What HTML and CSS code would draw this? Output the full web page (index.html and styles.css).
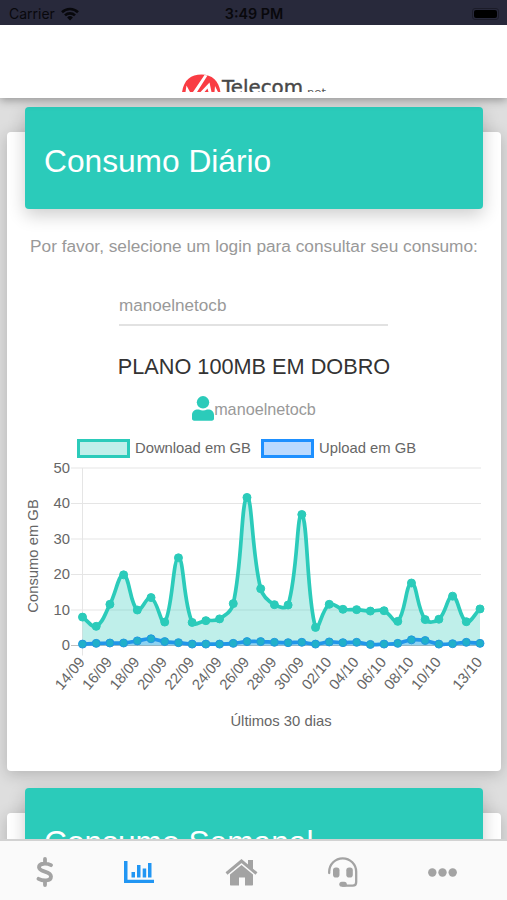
FILE: index.html
```
<!DOCTYPE html>
<html lang="pt">

<head>
    <meta charset="UTF-8">
    <meta name="viewport" content="width=device-width, initial-scale=1.0">
    <title>Consumo</title>
    <link rel="stylesheet" href="styles.css">
</head>

<body>
    <div class="status">
        <div class="carrier">
            <span>Carrier</span>
            <svg width="18" height="14" viewBox="0 0 18 14">
                <path d="M1 5.200a11.500 11.500 0 0 1 16 0M4 8.400a7.200 7.200 0 0 1 10 0" fill="none" stroke="#08080c" stroke-width="2.600"/>
                <path d="M9 13.400l-2.900-3a4.200 4.200 0 0 1 5.800 0z" fill="#08080c"/>
            </svg>
        </div>
        <span class="hora">3:49 PM</span>
        <div class="bateria"><i></i></div>
    </div>

    <header class="topo">
        <!-- logo cortada pela borda do topo -->
        <svg class="logo" width="150" height="20" viewBox="0 0 150 20">
            <path d="M0 20.500C1.500 8 9 2.500 19.500 2.500S37 9 38.500 20.500z" fill="#f93c43"/>
            <path d="M3.500 20l1-6.500 3.500 6.500zM11 20L22.500 3l3 .500L15 20zM18.500 20l9-9.500 2 9.500h-3l-1-3.500-3 3.500zM32.500 20l.500-6 3 6z" fill="#fff"/>
            <text class="logo-nome" x="40" y="22" textLength="81" lengthAdjust="spacingAndGlyphs">Telecom</text>
            <text class="logo-net" x="125" y="23.500" textLength="19" lengthAdjust="spacingAndGlyphs">net</text>
        </svg>
    </header>

    <main class="conteudo">
        <section class="card diario">
            <h1>Consumo Diário</h1>
            <p class="aviso"><span>Por favor, selecione um login para consultar seu consumo:</span></p>
            <div class="login">manoelnetocb</div>
            <h2 class="plano">PLANO 100MB EM DOBRO</h2>
            <div class="usuario">
                <svg width="22" height="25" viewBox="0 0 22 25">
                    <circle cx="11" cy="6.300" r="6.200" fill="#2bcbba"/>
                    <path d="M0 22.500v-3.500c0-3.500 2.500-5.500 6-5.500h1c2.500 1.200 5.500 1.200 8 0h1c3.500 0 6 2 6 5.500v3.500c0 1.400-.8 2.200-2.200 2.200H2.200C.8 24.700 0 23.900 0 22.500z" fill="#2bcbba"/>
                </svg>
                <span>manoelnetocb</span>
            </div>
            <div class="legenda">
                <i class="download"></i><span class="leg-down">Download em GB</span>
                <i class="upload"></i><span>Upload em GB</span>
            </div>
            <svg id="grafico" width="494" height="280" viewBox="0 0 494 280"></svg>
        </section>

        <section class="card">
            <h1>Consumo Semanal</h1>
        </section>
    </main>

    <nav class="menu">
        <a class="item">
            <svg width="18" height="30" viewBox="0 0 18 30">
                <path d="M15 8.200C11 6 3 5.800 3 10.300c0 5.200 12 3.500 12 9.200 0 5.200-8.300 4.600-12.500 2.300M9 2v4M9 24v4" fill="none" stroke="#a3a3a3" stroke-width="3.800" stroke-linecap="round"/>
            </svg>
        </a>
        <a class="item">
            <svg width="30" height="24" viewBox="0 0 30 24">
                <path d="M0 1h3.500v18.700H30V23H0zM7.500 12h3.500v5.500H7.500zM13 5h3.500v12.500H13zM18.700 8.500h3.500v9h-3.500zM24 3h3.500v14.500H24z" fill="#2196f3"/>
            </svg>
        </a>
        <a class="item">
            <svg width="33" height="27" viewBox="0 0 33 27">
                <path d="M1.500 14.500L16.500 2l15 12.500" fill="none" stroke="#a3a3a3" stroke-width="3"/>
                <path d="M23 1h5v10l-5-4zM5 15.500L16.500 6 28 15.500V25.500c0 .6-.4 1-1 1h-7v-8h-6v8H6c-.6 0-1-.4-1-1z" fill="#a3a3a3"/>
            </svg>
        </a>
        <a class="item">
            <svg width="30" height="30" viewBox="0 0 30 30">
                <path d="M1.200 16v-1.200a13.500 13.500 0 0 1 27 0V25c0 2.300-1.200 3.700-3.500 3.700H15" fill="none" stroke="#a3a3a3" stroke-width="2.300" stroke-linecap="round"/>
                <rect x="5" y="10.500" width="6.500" height="10" rx="2.800" fill="#a3a3a3"/>
                <rect x="18.300" y="10.500" width="6.500" height="10" rx="2.800" fill="#a3a3a3"/>
                <rect x="11.300" y="24.800" width="7.500" height="5" rx="2.500" fill="#a3a3a3"/>
            </svg>
        </a>
        <a class="item">
            <svg width="29" height="9" viewBox="0 0 29 9">
                <g fill="#a3a3a3">
                    <circle cx="4.300" cy="4.500" r="4.200"/>
                    <circle cx="14.500" cy="4.500" r="4.200"/>
                    <circle cx="24.700" cy="4.500" r="4.200"/>
                </g>
            </svg>
        </a>
    </nav>

    <script src="script.js"></script>
</body>

</html>
```
FILE: styles.css
```
* {
    box-sizing: border-box;
}

body {
    margin: 0;
    height: 900px;
    display: flex;
    flex-direction: column;
    overflow: hidden;
    background-color: #dedede;
    font-family: "Liberation Sans", Arial, sans-serif;
}

.status {
    height: 25px;
    flex-shrink: 0;
    display: grid;
    grid-template-columns: 1fr auto 1fr;
    align-items: center;
    padding: 2px 8px 0 9px;
    background-color: #28293b;
    color: #08080c;
    font-family: Inter, sans-serif;
    font-size: 13.5px;
    z-index: 3;
}

.carrier {
    display: flex;
    align-items: center;
    gap: 6px;
    font-size: 14px;
}

.hora {
    font-size: 14.3px;
    font-weight: 600;
}

.bateria {
    justify-self: end;
    width: 27px;
    height: 12px;
    padding: 1px;
    border: 1px solid #1c1c29;
    border-radius: 3px;
}

.bateria i {
    display: block;
    height: 8px;
    border-radius: 2px;
    background-color: #000;
}

.topo {
    height: 73px;
    flex-shrink: 0;
    padding: 47px 0 0 182px;
    background-color: #fff;
    box-shadow: 0 2px 9px rgba(0, 0, 0, 0.35);
    z-index: 2;
}

.logo {
    display: block;
}

.logo-nome {
    font-family: "DejaVu Sans", sans-serif;
    font-size: 19px;
    fill: #484848;
    stroke: #484848;
    stroke-width: 0.4px;
}

.logo-net {
    font-family: "DejaVu Sans", sans-serif;
    font-size: 11px;
    fill: #555;
}

.conteudo {
    flex: 1;
    min-height: 0;
    overflow: hidden;
    padding: 34px 6px 0 7px;
}

.card {
    height: 639px;
    margin-bottom: 42px;
    border-radius: 4px;
    background-color: #fff;
    box-shadow: 0 3px 16px rgba(0, 0, 0, 0.2);
    display: flow-root;
}

.card h1 {
    height: 102px;
    margin: -25px 18px 0;
    padding: 0 19px;
    border-radius: 4px;
    background-color: #2bcbba;
    box-shadow: 0 6px 18px rgba(0, 0, 0, 0.2);
    color: #fff;
    font-size: 31.7px;
    font-weight: normal;
    line-height: 108px;
}

.aviso {
    height: 24px;
    margin: 25px 0 0;
    color: #999;
    font-size: 17.25px;
    line-height: 24px;
    text-align: center;
    white-space: nowrap;
}

.login {
    width: 269px;
    height: 38px;
    margin: 30px 0 0 112px;
    border-bottom: 2px solid #e2e2e2;
    color: #999;
    font-size: 17.1px;
    line-height: 36px;
}

.plano {
    height: 30px;
    margin: 26px 0 0;
    color: #333;
    font-size: 21.7px;
    font-weight: normal;
    line-height: 30px;
    text-align: center;
}

.usuario {
    display: flex;
    justify-content: center;
    align-items: center;
    height: 27px;
    margin-top: 13px;
    color: #999;
    font-size: 16.2px;
}

.usuario span {
    padding-top: 2px;
}

.legenda {
    display: flex;
    align-items: center;
    height: 20px;
    margin: 16px 0 0 70px;
    color: #666;
    font-size: 14.8px;
    white-space: nowrap;
}

.legenda i {
    width: 53px;
    height: 19px;
    margin-right: 5px;
    border: 3.5px solid #2bcbba;
    background-color: #c0efea;
}

.legenda .upload {
    border-color: #1e90ff;
    background-color: #bbdaff;
}

.leg-down {
    margin-right: 10px;
}

#grafico {
    display: block;
    margin-top: 1px;
}

#grafico text {
    fill: #666;
    font-size: 14.8px;
}

.grade {
    stroke: #e5e5e5;
}

.grade-zero {
    stroke: #bfbfbf;
}

.linha {
    fill: none;
    stroke-width: 3.7;
    stroke-linejoin: round;
}

.down-area {
    fill: rgba(43, 203, 186, 0.3);
}

.down-linha {
    stroke: #2bcbba;
}

.down-ponto {
    fill: #2bcbba;
    stroke: #2bcbba;
}

.up-area {
    fill: rgba(30, 144, 255, 0.3);
}

.up-linha {
    stroke: #2196ea;
}

.up-ponto {
    fill: #20b0ca;
    stroke: #2199e0;
}

.menu {
    display: flex;
    justify-content: space-between;
    height: 61px;
    flex-shrink: 0;
    padding: 3px 50px 0 36px;
    border-top: 2px solid #d2d2d2;
    background-color: #fafafa;
    z-index: 2;
}

.item {
    display: flex;
    align-items: center;
}
```
FILE: script.js
```
const download = [8, 5.4, 11.6, 19.9, 10, 13.5, 6.6, 24.7, 6.5, 7, 7.5, 11.8, 41.7, 16, 11.5, 11.4, 36.9, 5.1, 11.6, 10.2, 10.1, 9.7, 9.8, 6.8, 17.6, 7.3, 7.4, 13.9, 6.7, 10.3];
const upload = [0.4, 0.6, 0.7, 0.7, 1.3, 1.9, 1.1, 0.8, 0.4, 0.4, 0.4, 0.6, 1.1, 1.1, 0.9, 0.8, 0.9, 0.4, 1, 0.8, 0.9, 0.3, 0.4, 0.6, 1.6, 1.4, 0.4, 0.5, 0.9, 0.6];

//area do grafico dentro do svg
const esq = 75.5, dir = 473, topo = 9, base = 186.5;
const svg = document.getElementById("grafico");

function x(i) {
    return esq + i * (dir - esq) / 29;
}

function y(v) {
    return base - v * (base - topo) / 50;
}

function limita(v) {
    return Math.max(topo, Math.min(base, v));
}

//curva suave passando por todos os pontos
function curva(dados) {
    const p = dados.map((v, i) => ({ x: x(i), y: y(v) }));
    const c = p.map((atual, i) => {
        const ant = p[i - 1] || atual;
        const prox = p[i + 1] || atual;
        const d1 = Math.hypot(atual.x - ant.x, atual.y - ant.y);
        const d2 = Math.hypot(prox.x - atual.x, prox.y - atual.y);
        const fa = 0.4 * d1 / (d1 + d2);
        const fb = 0.4 * d2 / (d1 + d2);
        return {
            ax: atual.x - fa * (prox.x - ant.x), ay: limita(atual.y - fa * (prox.y - ant.y)),
            bx: atual.x + fb * (prox.x - ant.x), by: limita(atual.y + fb * (prox.y - ant.y))
        };
    });
    let d = `M${p[0].x} ${p[0].y}`;
    for (let i = 1; i < p.length; i++) {
        d += `C${c[i - 1].bx} ${c[i - 1].by} ${c[i].ax} ${c[i].ay} ${p[i].x} ${p[i].y}`;
    }
    return d;
}

function serie(dados, nome) {
    const d = curva(dados);
    let s = `<path class="${nome}-area" d="${d}V${base}H${esq}z"/>`;
    s += `<path class="linha ${nome}-linha" d="${d}"/>`;
    dados.forEach((v, i) => {
        s += `<circle class="${nome}-ponto" cx="${x(i)}" cy="${y(v)}" r="4"/>`;
    });
    return s;
}

let html = "";
for (let v = 0; v <= 50; v += 10) {
    html += `<path class="${v ? "grade" : "grade-zero"}" d="M64 ${y(v)}H474"/>`;
    html += `<text x="63" y="${y(v) + 4.5}" text-anchor="end">${v}</text>`;
}
html += `<path class="grade" d="M${esq} ${topo}V${base + 10}"/>`;

//datas, uma sim e uma nao, terminando em 13/10
for (let i = 0; i < 30; i += 2) {
    if (i === 28) i = 29;
    const dia = i < 17 ? 14 + i : i - 16;
    const rotulo = String(dia).padStart(2, "0") + (i < 17 ? "/09" : "/10");
    html += `<text transform="translate(${x(i) + 3} ${base + 17}) rotate(-50)" text-anchor="end">${rotulo}</text>`;
}

html += serie(download, "down") + serie(upload, "up");
html += `<text x="274" y="267" text-anchor="middle">Últimos 30 dias</text>`;
html += `<text transform="translate(31 97) rotate(-90)" text-anchor="middle">Consumo em GB</text>`;
svg.innerHTML = html;
```
